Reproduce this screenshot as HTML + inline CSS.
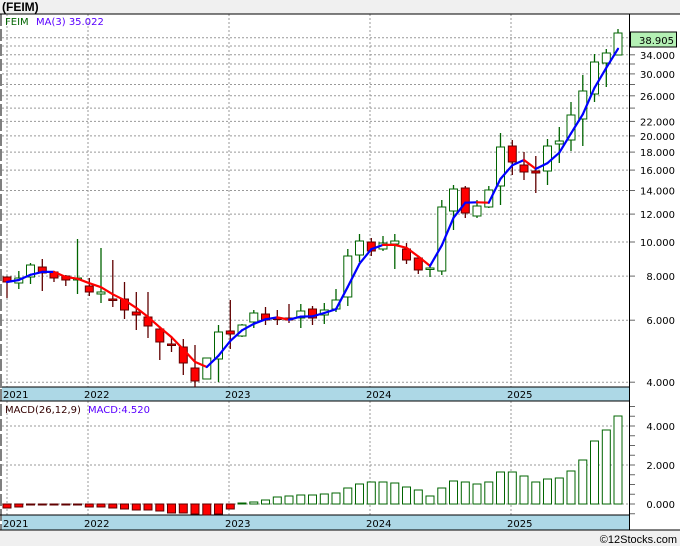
<!DOCTYPE html>
<html><head><meta charset="utf-8"><style>
html,body{margin:0;padding:0;background:#f0f0f0;}
body{width:680px;height:546px;overflow:hidden;position:relative;font-family:"DejaVu Sans","Liberation Sans",sans-serif;}
svg{position:absolute;left:0;top:0;}
</style></head><body>
<svg id="s" width="680" height="546" xmlns="http://www.w3.org/2000/svg" font-family="DejaVu Sans, Liberation Sans, sans-serif"></svg>
<script>
var s=document.getElementById('s');var h='';
function Y(p){return 242-153*Math.log(p/10);}
function P(y){return 10*Math.exp((242-y)/153);}
// frame
h+='<rect x="0" y="14" width="680" height="516" fill="#fff"/>';
h+='<text x="2" y="11" font-size="12" font-weight="bold" font-family="Liberation Sans, sans-serif">(FEIM)</text>';
// grid main
for(var p=4;p<=38;p+=2){var y=Y(p);if(y<16||y>386)continue;h+='<line x1="2" x2="629" y1="'+y.toFixed(1)+'" y2="'+y.toFixed(1)+'" stroke="#999" stroke-dasharray="2,2"/>';h+='<line x1="629" x2="635" y1="'+y.toFixed(1)+'" y2="'+y.toFixed(1)+'" stroke="#666"/>';}
var xs=[7,88,229,370,511];
xs.forEach(function(x){h+='<line x1="'+x+'" x2="'+x+'" y1="14" y2="387" stroke="#999" stroke-dasharray="2,2"/>';h+='<line x1="'+x+'" x2="'+x+'" y1="401" y2="515" stroke="#999" stroke-dasharray="2,2"/>';});
[426,465,504].forEach(function(y){h+='<line x1="2" x2="629" y1="'+y+'" y2="'+y+'" stroke="#999" stroke-dasharray="2,2"/>';});
for(var v=-0.5;v<=5;v+=0.5){var y=504-19.5*v;if(y<403||y>528)continue;h+='<line x1="629" x2="635" y1="'+y+'" y2="'+y+'" stroke="#666"/>';}
// bands
h+='<rect x="2" y="387" width="627" height="14" fill="#add8e6"/><rect x="2" y="515" width="627" height="15" fill="#add8e6"/>';
h+='<line x1="0" x2="630" y1="387" y2="387" stroke="#000"/><line x1="0" x2="630" y1="401" y2="401" stroke="#000"/><line x1="0" x2="630" y1="515" y2="515" stroke="#000"/><line x1="0" x2="680" y1="530" y2="530" stroke="#000"/>';
h+='<line x1="0" x2="680" y1="14" y2="14" stroke="#000"/><line x1="629.5" x2="629.5" y1="14" y2="530" stroke="#000"/><line x1="1" x2="1" y1="14" y2="530" stroke="#000" stroke-dasharray="12,3"/>';
var yrs=['2021','2022','2023','2024','2025'];
xs.forEach(function(x,i){h+='<text x="'+(x-4)+'" y="398" font-size="10">'+yrs[i]+'</text><text x="'+(x-4)+'" y="527" font-size="10">'+yrs[i]+'</text>';});
// axis labels
var labs=[[34,'34.000'],[30,'30.000'],[26,'26.000'],[22,'22.000'],[20,'20.000'],[18,'18.000'],[16,'16.000'],[14,'14.000'],[12,'12.000'],[10,'10.000'],[8,'8.000'],[6,'6.000'],[4,'4.000']];
labs.forEach(function(l){h+='<text x="675" y="'+(Y(l[0])+4).toFixed(1)+'" font-size="10" text-anchor="end">'+l[1]+'</text>';});
[[426,'4.000'],[465,'2.000'],[504,'0.000']].forEach(function(l){h+='<text x="675" y="'+(l[0]+4)+'" font-size="10" text-anchor="end">'+l[1]+'</text>';});
h+='<rect x="630.5" y="32" width="46" height="15" fill="#b4f0b4" stroke="#000"/><text x="674" y="44" font-size="10" text-anchor="end">38.905</text>';
// candles: [color, bodyTop, bodyBot, wickTop, wickBot]
var c=[['r',277,282,277,298],['g',278,283,271,289],['g',265,277,263,284],['r',267,273,259,291],['r',272,278,271,282],['r',276,280,275,286],['g',278,280,239,294],['r',286,292,278,296],['g',292,294,248,303],['r',299,299,260,307],['r',299,310,282,319],['r',312,315,292,330],['r',317,326,292,338],['r',329,342,329,360],['r',344,344,338,352],['r',347,363,339,375],['r',368,381,345,387],['g',358,379,358,379],['g',332,359,325,382],['r',331,334,300,349],['g',325,336,324,337],['g',313,322,310,328],['r',314,320,307,325],['r',318,319,310,325],['r',318,320,304,323],['g',311,318,304,328],['r',309,318,306,325],['g',310,315,303,324],['g',300,309,289,312],['g',256,297,249,306],['g',241,255,234,262],['r',242,251,238,256],['g',243,249,236,251],['g',241,244,234,269],['r',249,260,243,264],['r',258,270,258,274],['g',268,269,264,277],['g',207,271,200,275],['g',189,211,185,230],['r',188,213,186,218],['g',206,216,200,218],['g',190,207,186,208],['g',147,186,133,205],['r',146,162,140,175],['r',165,172,152,180],['r',171,173,156,193],['g',146,171,139,185],['g',141,144,127,163],['g',115,140,102,151],['g',91,119,75,146],['g',62,94,54,102],['g',53,63,49,87],['g',33,55,29,55]];
var cl=[];
c.forEach(function(d,i){var x=7+11.75*i;var g=d[0]=='g';var wc=g?'#006400':'#600000';
h+='<line x1="'+x.toFixed(1)+'" x2="'+x.toFixed(1)+'" y1="'+d[3]+'" y2="'+d[4]+'" stroke="'+wc+'" stroke-width="1.3"/>';
var bh=Math.max(d[2]-d[1],1.5);
h+='<rect x="'+(x-4).toFixed(1)+'" y="'+d[1]+'" width="8" height="'+bh+'" fill="'+(g?'#fff':'#f00')+'" stroke="'+(g?'#006400':'#600000')+'"/>';
cl.push(P(g?d[1]:d[2]));});
// MA
var ma=[];for(var i=0;i<cl.length;i++){var a=cl.slice(Math.max(0,i-2),i+1);ma.push(a.reduce(function(u,v){return u+v;},0)/a.length);}
for(var i=1;i<ma.length;i++){var x1=7+11.75*(i-1),x2=7+11.75*i;var col=ma[i]>=ma[i-1]?'#0000ff':'#ff0000';
h+='<line x1="'+x1.toFixed(1)+'" x2="'+x2.toFixed(1)+'" y1="'+Y(ma[i-1]).toFixed(1)+'" y2="'+Y(ma[i]).toFixed(1)+'" stroke="'+col+'" stroke-width="2.2" stroke-linecap="round"/>';}
h+='<text x="5" y="25" font-size="10" fill="#006400">FEIM</text><text x="36" y="25" font-size="10" fill="#5a00ff">MA(3)  35.022</text>';
// MACD
var m=[508,507,505,505,505,505,505,507,507,508,509,510,510,511,513,513,514,515,514,509,503,502,500,497,496,495,495,494,493,488,484,482,482,483,487,490,496,488,481,482,484,482,472,472,476,482,479,478,471,460,441,430,416];
m.forEach(function(t,i){var x=7+11.75*i;var up=t<504;var y=up?t:504;var hh=Math.max(Math.abs(t-504),1);
h+='<rect x="'+(x-4).toFixed(1)+'" y="'+y+'" width="8" height="'+hh+'" fill="'+(up?'#fff':'#f00')+'" stroke="'+(up?'#006400':'#600000')+'"/>';});
h+='<text x="5" y="413" font-size="10" fill="#300">MACD(26,12,9)</text><text x="88" y="413" font-size="10" fill="#5a00ff">MACD:4.520</text>';
h+='<text x="677" y="543" font-size="11" text-anchor="end" font-family="Liberation Sans, sans-serif">©12Stocks.com</text>';
s.innerHTML=h;
</script>
</body></html>
